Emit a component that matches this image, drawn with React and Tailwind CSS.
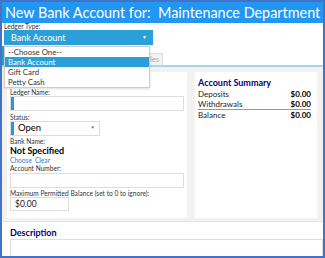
function Label({ children }) {
  return <p className="text-[6.6px] leading-[7px] text-[#333]">{children}</p>;
}

function SummaryRow({ label, value }) {
  return (
    <div className="flex h-[10px] items-center justify-between text-[8px] leading-[10px]">
      <span className="text-[#222]">{label}</span>
      <span className="font-bold text-black">{value}</span>
    </div>
  );
}

export default function App() {
  const options = ["--Choose One--", "Bank Account", "Gift Card", "Petty Cash"];

  return (
    <div className="relative h-[258px] w-[325px] overflow-hidden border-2 border-[#4472c4] bg-white font-['Lato',sans-serif]">
      <header className="h-[21px] bg-[#2196f3] pl-[3px] text-[14.4px] leading-[21px] whitespace-pre text-white">
        New Bank Account for:  Maintenance Department
      </header>

      <div className="px-[2px]">
        <Label>Ledger Type:</Label>
        <div className="flex h-[15px] w-[149px] items-center justify-between bg-[#2a9fd8] pl-[7px] pr-[6px] text-[9px] text-white">
          <span>Bank Account</span>
          <span className="text-[5px]">▼</span>
        </div>
      </div>

      <div className="flex h-[22px] items-end border-b-2 border-[#a6d4f2]">
        <div className="h-[19px] w-[110px] bg-[#2a9fd8]" />
        <div className="flex h-[12px] w-[51px] items-center justify-end border border-b-0 border-[#ddd] bg-[#f3f3f3] pr-[3px] text-[7.5px] text-[#aaa]">
          Schedules
        </div>
      </div>

      <div className="flex gap-[8px] bg-[#f2f2f2] px-[5px] pb-[3px] pt-[5px]">
        <div className="h-[146px] w-[180px] bg-white px-[3px] pt-[17px]">
          <Label>Ledger Name:</Label>
          <div className="flex h-[15px] w-[174px] border border-[#ddd]">
            <div className="w-[3px] bg-[#2196f3]" />
          </div>
          <div className="mt-[3px]">
            <Label>Status:</Label>
          </div>
          <div className="flex h-[15px] w-[90px] items-center justify-between border border-[#ddd]">
            <div className="flex h-full items-center">
              <div className="h-full w-[3px] bg-[#2196f3]" />
              <span className="pl-[4px] text-[9.5px] text-black">Open</span>
            </div>
            <span className="pr-[4px] text-[4.5px] text-[#666]">▼</span>
          </div>
          <div className="mt-[2px]">
            <Label>Bank Name:</Label>
          </div>
          <p className="text-[9px] font-bold leading-[11px] text-black">Not Specified</p>
          <p className="text-[6.6px] leading-[8px] text-[#2a7fc8]">
            Choose<span className="ml-[3px]">Clear</span>
          </p>
          <div className="mt-[1px]">
            <Label>Account Number:</Label>
          </div>
          <div className="mt-[1px] h-[15px] w-[174px] border border-[#ddd]" />
          <div className="mt-[2px]">
            <Label>Maximum Permitted Balance (set to 0 to ignore):</Label>
          </div>
          <div className="flex h-[14px] w-[59px] items-center border border-[#ddd] pl-[4px] text-[8.5px] text-[#222]">
            $0.00
          </div>
        </div>

        <div className="h-[146px] w-[122px] bg-white pl-[3px] pr-[6px] pt-[5px]">
          <p className="text-[9px] font-bold leading-[11px] text-[#000080]">Account Summary</p>
          <div className="mt-[1px]">
            <SummaryRow label="Deposits" value="$0.00" />
            <SummaryRow label="Withdrawals" value="$0.00" />
            <div className="h-[1px] bg-[#999]" />
            <SummaryRow label="Balance" value="$0.00" />
          </div>
        </div>
      </div>

      <div className="ml-[1px] border-t border-[#e4e4e4] bg-white pl-[7px] pt-[5px]">
        <p className="text-[9px] font-bold leading-[11px] text-[#000080]">Description</p>
        <div className="mt-[1px] h-[30px] border border-[#ddd]" />
      </div>

      <ul className="absolute left-[2px] top-[44px] w-[146px] border border-[#ccc] bg-white text-[7.8px] leading-[10px] text-[#333] shadow-sm">
        {options.map((o) => (
          <li
            key={o}
            className={o === "Bank Account" ? "bg-[#2a9fd8] pl-[3px] text-white" : "pl-[3px]"}
          >
            {o}
          </li>
        ))}
      </ul>
    </div>
  );
}
